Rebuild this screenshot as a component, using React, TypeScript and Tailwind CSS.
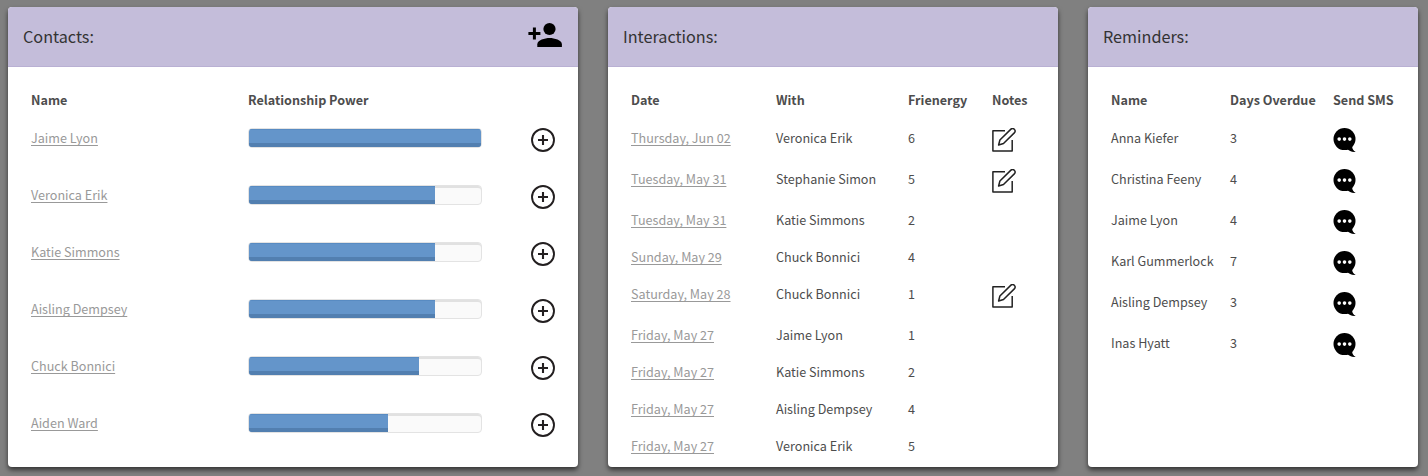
import type { ReactNode } from "react";

const contacts = [
  { name: "Jaime Lyon", power: 100 },
  { name: "Veronica Erik", power: 80 },
  { name: "Katie Simmons", power: 80 },
  { name: "Aisling Dempsey", power: 80 },
  { name: "Chuck Bonnici", power: 73.3 },
  { name: "Aiden Ward", power: 60 },
];

const interactions = [
  { date: "Thursday, Jun 02", person: "Veronica Erik", score: 6, note: true },
  { date: "Tuesday, May 31", person: "Stephanie Simon", score: 5, note: true },
  { date: "Tuesday, May 31", person: "Katie Simmons", score: 2, note: false },
  { date: "Sunday, May 29", person: "Chuck Bonnici", score: 4, note: false },
  { date: "Saturday, May 28", person: "Chuck Bonnici", score: 1, note: true },
  { date: "Friday, May 27", person: "Jaime Lyon", score: 1, note: false },
  { date: "Friday, May 27", person: "Katie Simmons", score: 2, note: false },
  { date: "Friday, May 27", person: "Aisling Dempsey", score: 4, note: false },
  { date: "Friday, May 27", person: "Veronica Erik", score: 5, note: false },
];

const reminders = [
  { name: "Anna Kiefer", days: 3 },
  { name: "Christina Feeny", days: 4 },
  { name: "Jaime Lyon", days: 4 },
  { name: "Karl Gummerlock", days: 7 },
  { name: "Aisling Dempsey", days: 3 },
  { name: "Inas Hyatt", days: 3 },
];

function AddPersonIcon() {
  return (
    <svg width="34" height="26" viewBox="0 0 34 26" className="mb-1 block">
      <circle cx="21.5" cy="7" r="6.1" />
      <path d="M9.3 25v-2.8c0-4 7.6-6.2 12.3-6.2s12.3 2.2 12.3 6.2V25z" />
      <path d="M4.9 5.4h3v4.5h4.5v3H7.9v4.5h-3v-4.5H.4v-3h4.5z" />
    </svg>
  );
}

function PlusIcon() {
  return (
    <svg width="24" height="24" viewBox="0 0 24 24" fill="none" stroke="#231f20" strokeWidth="1.9" className="mt-px block">
      <circle cx="12" cy="12" r="11" />
      <path d="M12 7v10M7 12h10" strokeWidth="2.1" />
    </svg>
  );
}

function NoteIcon() {
  return (
    <svg width="25" height="24" viewBox="0 0 25 24" fill="none" stroke="#222" strokeWidth="1.5" strokeLinejoin="round" className="mt-px block">
      <path d="M13 2.8H.9v20.3h19.3V12.1" />
      <path d="M6.6 17l1.3-5L18.7 1.4c1-1 2.6-1 3.6-.1 1 1 1 2.500 0 3.600L11.500 15.500z" />
    </svg>
  );
}

function SmsIcon() {
  return (
    <svg width="24" height="24" viewBox="0 0 24 24" className="mt-px block">
      <circle cx="11.5" cy="11.1" r="11" />
      <path d="M14 20.800c2 2 5 3.400 8.700 3.200-2.100-1-3.400-2.700-3.700-5.900z" />
      <g fill="#fff">
        <circle cx="6.200" cy="11.100" r="1.800" />
        <circle cx="11.500" cy="11.100" r="1.800" />
        <circle cx="16.800" cy="11.100" r="1.800" />
      </g>
    </svg>
  );
}

function Card({ title, width, action, children }: { title: string; width: string; action?: ReactNode; children: ReactNode }) {
  return (
    <section className={`${width} h-[460px] shrink-0 overflow-hidden rounded bg-white shadow-[0_3px_5px_rgba(0,0,0,0.6)]`}>
      <header className="flex h-[60px] items-center justify-between border-b border-[#b9b0d3] bg-[#c4bdda] pl-[15px] pr-4">
        <h2 className="mb-0.5 text-[16.2px] leading-6 text-[#333]">{title}</h2>
        {action}
      </header>
      <div className="pl-[23px] pt-[15px]">{children}</div>
    </section>
  );
}

const link = "text-[#999] underline decoration-1 underline-offset-2 [text-decoration-skip-ink:none]";

export default function App() {
  return (
    <main className="flex h-[476px] gap-[30px] overflow-hidden bg-[#808080] pl-2 pt-[7px] font-['Noto_Sans_CJK_SC',sans-serif] text-[12.6px] leading-[21px] text-[#4d4d4d]">
      <Card title="Contacts:" width="w-[570px]" action={<AddPersonIcon />}>
        <div className="grid grid-cols-[217px_283px_1fr] pb-[9px] pt-[7px] font-bold">
          <span>Name</span>
          <span>Relationship Power</span>
        </div>
        {contacts.map((c) => (
          <div key={c.name} className="grid h-[57px] grid-cols-[217px_283px_1fr] items-start pt-2">
            <div>
              <a className={link}>{c.name}</a>
            </div>
            <div className="mt-px h-5 w-[234px] overflow-hidden rounded border border-[#e3e3e3] bg-[#fafafa] shadow-[inset_0_2px_0_#e1e1e1]">
              <div className="h-full bg-[#6495ca] shadow-[inset_0_1px_0_#588bc2,inset_0_-4px_0_#527fb0]" style={{ width: `${c.power}%` }} />
            </div>
            <PlusIcon />
          </div>
        ))}
      </Card>

      <Card title="Interactions:" width="w-[450px]">
        <div className="grid grid-cols-[145px_132px_84px_1fr] pb-[9px] pt-[7px] font-bold">
          <span>Date</span>
          <span>With</span>
          <span>Frienergy</span>
          <span>Notes</span>
        </div>
        {interactions.map((i, n) => (
          <div key={n} className="grid grid-cols-[145px_132px_84px_1fr] items-start py-2">
            <div>
              <a className={link}>{i.date}</a>
            </div>
            <span>{i.person}</span>
            <span>{i.score}</span>
            {i.note && <NoteIcon />}
          </div>
        ))}
      </Card>

      <Card title="Reminders:" width="w-[330px]">
        <div className="grid grid-cols-[119px_103px_1fr] pb-[9px] pt-[7px] font-bold">
          <span>Name</span>
          <span>Days Overdue</span>
          <span>Send SMS</span>
        </div>
        {reminders.map((r) => (
          <div key={r.name} className="grid h-[41px] grid-cols-[119px_103px_1fr] items-start pt-2">
            <span>{r.name}</span>
            <span>{r.days}</span>
            <SmsIcon />
          </div>
        ))}
      </Card>
    </main>
  );
}
